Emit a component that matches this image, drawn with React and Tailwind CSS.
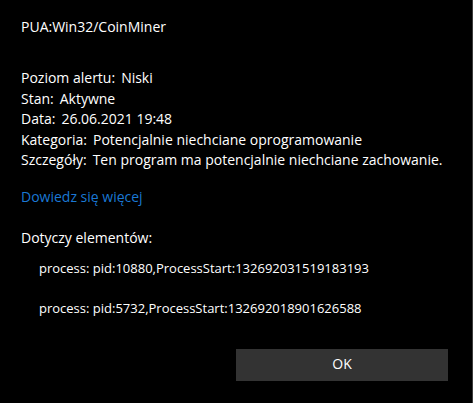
export default function App() {
  const rows = [
    ['Poziom alertu:', 'Niski'],
    ['Stan:', 'Aktywne'],
    ['Data:', '26.06.2021 19:48'],
    ['Kategoria:', 'Potencjalnie niechciane oprogramowanie'],
    ['Szczegóły:', 'Ten program ma potencjalnie niechciane zachowanie.'],
  ]
  const items = [
    'process: pid:10880,ProcessStart:132692031519183193',
    'process: pid:5732,ProcessStart:132692018901626588',
  ]

  return (
    <div className="w-[473px] h-[403px] bg-black border-r border-[#3c3c3c] text-white font-['Open_Sans',sans-serif] text-[14px] leading-[20.5px] overflow-hidden">
      <div className="pl-[21px] pt-[17px]">
        <h1 className="text-[14px] leading-[20px]">PUA:Win32/CoinMiner</h1>

        <div className="mt-[31px]">
          {rows.map(([label, value]) => (
            <div key={label} className="flex gap-[6px] whitespace-nowrap">
              <span>{label}</span>
              <span>{value}</span>
            </div>
          ))}
        </div>

        <a className="block mt-[16px] text-[#1a78d4]">Dowiedz się więcej</a>

        <p className="mt-[21px]">Dotyczy elementów:</p>

        <div className="pl-[18px] mt-[9px] flex flex-col gap-[20px]">
          {items.map((t) => (
            <p key={t} className="text-[13px] whitespace-nowrap">{t}</p>
          ))}
        </div>
      </div>

      <div className="flex justify-end pr-[24px] mt-[30px]">
        <button className="w-[212px] h-[32px] bg-[#333333] text-white text-[14px]">OK</button>
      </div>
    </div>
  )
}
